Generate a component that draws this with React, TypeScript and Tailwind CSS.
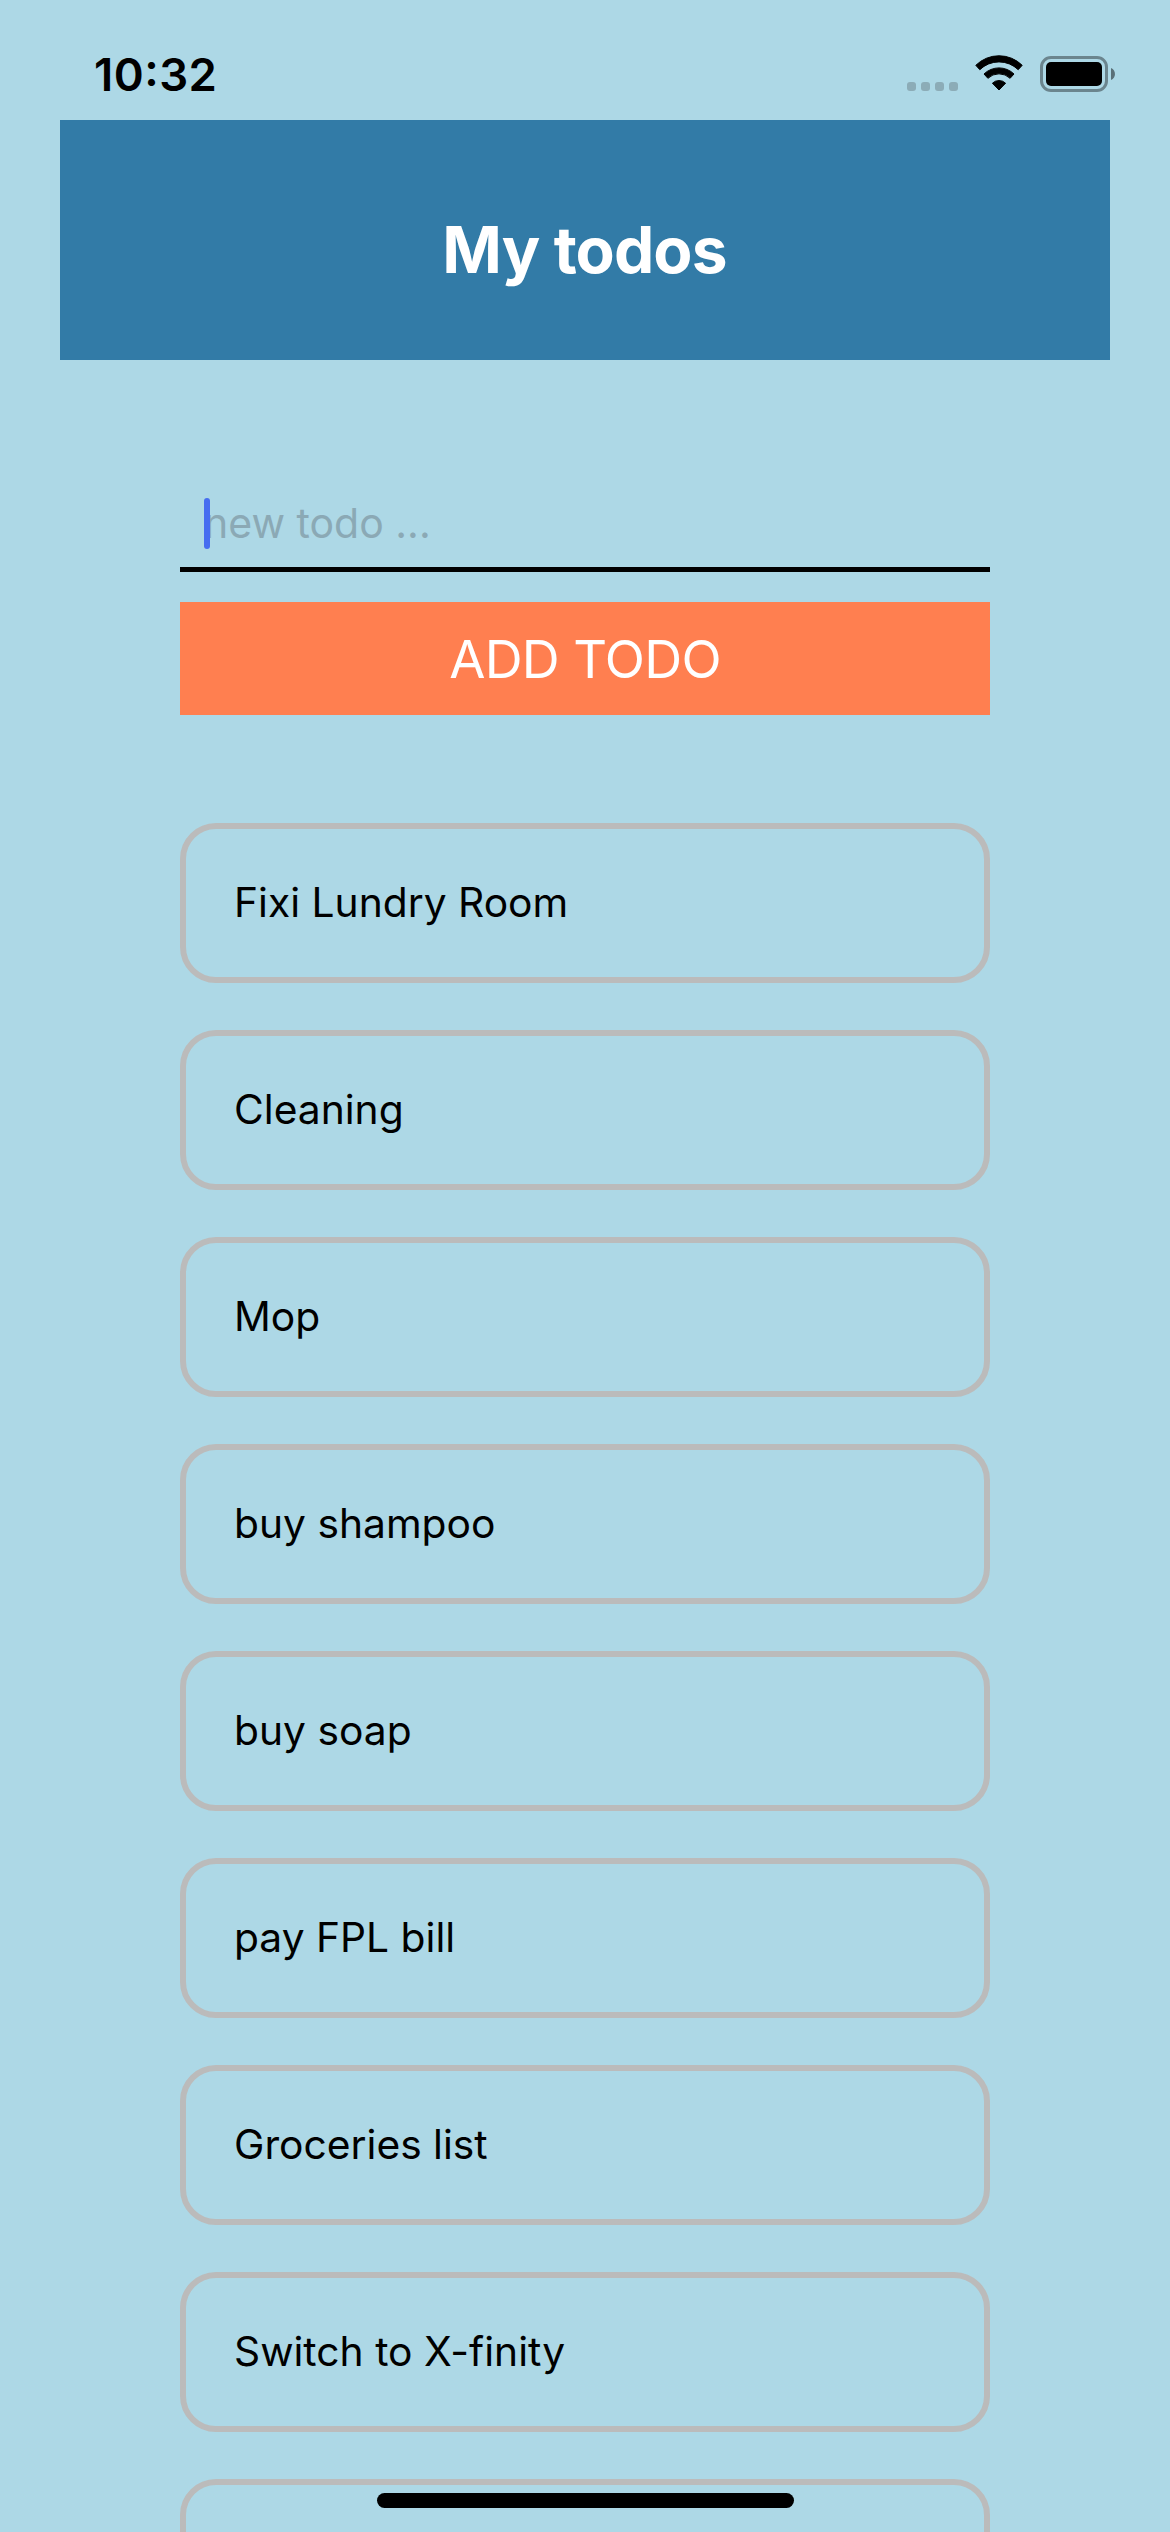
const todos = [
  'Fixi Lundry Room',
  'Cleaning',
  'Mop',
  'buy shampoo',
  'buy soap',
  'pay FPL bill',
  'Groceries list',
  'Switch to X-finity',
  '',
];

function SignalDots() {
  return (
    <div className="mt-[37px] flex gap-[5px]">
      {[0, 1, 2, 3].map((i) => (
        <span key={i} className="size-[9px] rounded-[3px] bg-[#8cacb7]" />
      ))}
    </div>
  );
}

function WifiIcon() {
  return (
    <svg
      className="mt-2.5 ml-[17px] h-[37px] w-12"
      viewBox="0 0 48 37"
      stroke="#000"
      strokeWidth="1"
      strokeLinejoin="round"
    >
      <path d="M.8 11.3A33 33 0 0 1 47.2 11.3L43.2 15.7A27.5 27.5 0 0 0 4.8 15.7Z" />
      <path d="M9 20A21.5 21.5 0 0 1 39 20L35.1 24.3A16 16 0 0 0 12.9 24.3Z" />
      <path d="M17.4 29.2A9.5 9.5 0 0 1 30.6 29.2L24 36Z" />
    </svg>
  );
}

function BatteryIcon() {
  return (
    <svg className="mt-3 ml-[17px] h-9 w-[75px]" viewBox="0 0 75 36">
      <rect x="1.5" y="1.5" width="65" height="33" rx="9.5" fill="none" stroke="#6b858e" strokeWidth="3" />
      <rect x="6" y="6" width="56" height="24" rx="5" />
      <path d="M71 12C76.3 14 76.3 22 71 24Z" fill="#5a7078" />
    </svg>
  );
}

function StatusBar() {
  return (
    <div className="flex h-[120px] items-start pt-[45px] pr-[55px] pl-[94px] text-black">
      <time className="mt-[5px] text-[45.5px] leading-[50px] font-semibold tracking-[0.47px]">10:32</time>
      <div className="ml-auto flex items-start">
        <SignalDots />
        <div className="-mt-[1px] flex items-start">
          <WifiIcon />
          <BatteryIcon />
        </div>
      </div>
    </div>
  );
}

export default function App() {
  return (
    <div className="relative h-[2532px] w-[1170px] overflow-hidden bg-[#add8e6] font-['Inter',sans-serif] [font-feature-settings:'calt'_1]">
      <StatusBar />
      <header className="mx-[60px] h-60 bg-[#327ba7] pt-[90px] pr-px text-center text-[64px] leading-[80px] font-bold tracking-[-0.9px] text-white">
        <h1>My todos</h1>
      </header>
      <main className="mx-[180px] pt-[114px]">
        <div className="relative h-[98px] border-b-[5px] border-black pt-6 pl-6">
          <p className="text-[41px] leading-[50px] text-[#8ba9b5]">new todo ...</p>
          <span className="absolute top-6 left-6 h-[51px] w-1.5 rounded-full bg-[#466df0]" />
        </div>
        <button className="mt-[30px] flex h-[113px] w-full items-start justify-center bg-[#ff7f50] pt-[18px] text-[52.5px] leading-[78px] tracking-[-0.69px] text-white">
          ADD TODO
        </button>
        <ul className="mt-[108px] flex flex-col gap-[47px]">
          {todos.map((todo, i) => (
            <li
              key={i}
              className="h-40 rounded-[36px] border-6 border-[#bbb] px-12 pt-12 text-[40.75px] leading-[51px] text-black"
            >
              {todo}
            </li>
          ))}
        </ul>
      </main>
      <div className="absolute top-[2493px] left-[377px] h-[15px] w-[417px] rounded-full bg-black" />
    </div>
  );
}
